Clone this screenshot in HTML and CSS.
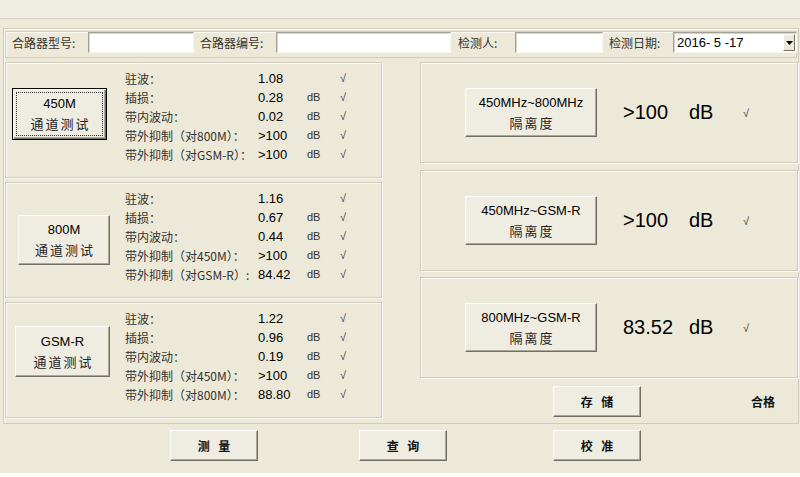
FILE: index.html
```html
<!DOCTYPE html>
<html lang="zh-CN">
<head>
<meta charset="utf-8">
<title>合路器测试</title>
<link rel="stylesheet" href="styles.css">
</head>
<body>
<div class="app">
  <div class="titlebar"></div>
  <div class="frame">
    <div class="inforow">
      <span class="lbl l1">合路器型号:</span><div class="field f1"></div>
      <span class="lbl l2">合路器编号:</span><div class="field f2"></div>
      <span class="lbl l3">检测人:</span><div class="field f3"></div>
      <span class="lbl l4">检测日期:</span>
      <div class="field combo">
        <span class="combo-text">2016- 5 -17</span>
        <span class="combo-btn"><svg width="7" height="4" viewBox="0 0 7 4"><path d="M0 0H7L3.5 4Z" fill="#000"/></svg></span>
      </div>
    </div>
    <div class="main">
      <div class="col-left">
        <section class="chan">
          <div class="btn chan-btn default b1"><div class="focus"><span class="en">450M</span><span class="zh">通道测试</span></div></div>
          <div class="results">
            <div class="r"><span class="k">驻波：</span><span class="v">1.08</span><span class="u"></span><span class="c">√</span></div>
            <div class="r"><span class="k">插损：</span><span class="v">0.28</span><span class="u">dB</span><span class="c">√</span></div>
            <div class="r"><span class="k">带内波动：</span><span class="v">0.02</span><span class="u">dB</span><span class="c">√</span></div>
            <div class="r"><span class="k">带外抑制（对800M）：</span><span class="v">&gt;100</span><span class="u">dB</span><span class="c">√</span></div>
            <div class="r"><span class="k">带外抑制（对GSM-R）：</span><span class="v">&gt;100</span><span class="u">dB</span><span class="c">√</span></div>
          </div>
        </section>
        <section class="chan">
          <div class="btn chan-btn b2"><span class="en">800M</span><span class="zh">通道测试</span></div>
          <div class="results">
            <div class="r"><span class="k">驻波：</span><span class="v">1.16</span><span class="u"></span><span class="c">√</span></div>
            <div class="r"><span class="k">插损：</span><span class="v">0.67</span><span class="u">dB</span><span class="c">√</span></div>
            <div class="r"><span class="k">带内波动：</span><span class="v">0.44</span><span class="u">dB</span><span class="c">√</span></div>
            <div class="r"><span class="k">带外抑制（对450M）：</span><span class="v">&gt;100</span><span class="u">dB</span><span class="c">√</span></div>
            <div class="r"><span class="k">带外抑制（对GSM-R）:</span><span class="v">84.42</span><span class="u">dB</span><span class="c">√</span></div>
          </div>
        </section>
        <section class="chan">
          <div class="btn chan-btn b3"><span class="en">GSM-R</span><span class="zh">通道测试</span></div>
          <div class="results">
            <div class="r"><span class="k">驻波：</span><span class="v">1.22</span><span class="u"></span><span class="c">√</span></div>
            <div class="r"><span class="k">插损：</span><span class="v">0.96</span><span class="u">dB</span><span class="c">√</span></div>
            <div class="r"><span class="k">带内波动：</span><span class="v">0.19</span><span class="u">dB</span><span class="c">√</span></div>
            <div class="r"><span class="k">带外抑制（对450M）：</span><span class="v">&gt;100</span><span class="u">dB</span><span class="c">√</span></div>
            <div class="r"><span class="k">带外抑制（对800M）：</span><span class="v">88.80</span><span class="u">dB</span><span class="c">√</span></div>
          </div>
        </section>
      </div>
      <div class="col-right">
        <section class="iso">
          <div class="btn iso-btn"><span class="en">450MHz~800MHz</span><span class="zh">隔离度</span></div>
          <span class="iso-v">&gt;100</span><span class="iso-u">dB</span><span class="iso-c">√</span>
        </section>
        <section class="iso iso2">
          <div class="btn iso-btn"><span class="en">450MHz~GSM-R</span><span class="zh">隔离度</span></div>
          <span class="iso-v">&gt;100</span><span class="iso-u">dB</span><span class="iso-c">√</span>
        </section>
        <section class="iso iso3">
          <div class="btn iso-btn"><span class="en">800MHz~GSM-R</span><span class="zh">隔离度</span></div>
          <span class="iso-v">83.52</span><span class="iso-u">dB</span><span class="iso-c">√</span>
        </section>
        <div class="save-row">
          <div class="btn cmd save">存 储</div>
          <span class="verdict">合格</span>
        </div>
      </div>
    </div>
  </div>
  <div class="bottombar">
    <div class="btn cmd m1">测 量</div>
    <div class="btn cmd m2">查 询</div>
    <div class="btn cmd m3">校 准</div>
  </div>
</div>
</body>
</html>
```
FILE: styles.css
```css
* { box-sizing: border-box; margin: 0; padding: 0; }
html, body { width: 800px; height: 477px; overflow: hidden; background: #fff; }
body { font-family: "Liberation Sans", "Noto Sans CJK SC", sans-serif; color: #000; }

.app { width: 800px; height: 473px; background: #ECE9D8; display: flex; flex-direction: column; }

.titlebar { flex: none; height: 19px; background: #EFEDE4; border-bottom: 1px solid #D6D3C5; }

.frame {
  flex: none; margin: 9px 0 0 3px; width: 796px; height: 396px;
  border: 1px solid #CFCCBD; box-shadow: inset 1px 1px #FAF9F3;
  padding-top: 2px;
}

/* info row */
.inforow {
  margin-left: 1px; width: 792px; height: 27px;
  border: 1px solid #CFCCBD; box-shadow: inset 1px 1px #FAF9F3;
  display: flex; align-items: flex-start; padding-left: 6px;
}
.lbl {
  font-family: "Noto Sans CJK SC", sans-serif; font-size: 12px; line-height: 21px;
  color: #333; white-space: nowrap; flex: none;
}
.l1 { width: 76px; }
.l2 { width: 76px; margin-left: 6px; }
.l3 { width: 57px; margin-left: 7px; }
.l4 { width: 64px; margin-left: 6px; }
.field {
  flex: none; height: 21px; background: #fff;
  border: 1px solid; border-color: #A3A195 #F6F5F0 #F6F5F0 #A3A195;
  box-shadow: inset 1px 1px #D8D5CA;
}
.f1 { width: 106px; }
.f2 { width: 175px; }
.f3 { width: 88px; }
.combo { width: 124px; display: flex; align-items: center; justify-content: space-between; padding: 0 1px 0 3px; }
.combo-text { font-size: 13px; line-height: 19px; }
.combo-btn {
  width: 12px; height: 17px; background: #ECE9D8;
  border: 1px solid; border-color: #fff #716F64 #716F64 #fff;
  display: flex; align-items: center; justify-content: center;
}

/* main */
.main { display: flex; margin-top: 4px; padding-left: 1px; }
.col-left { width: 377px; display: flex; flex-direction: column; gap: 4px; }
.col-right { width: 378px; margin-left: 38px; display: flex; flex-direction: column; }

.chan, .iso {
  border: 1px solid #CFCCBD; box-shadow: inset 1px 1px #FAF9F3, 1px 1px #FAF9F3;
}
.chan { height: 116px; display: grid; grid-template-columns: 119px 1fr; align-items: start; }

/* buttons */
.btn {
  background: #EFECE2;
  border: 1px solid; border-color: #FFFFFF #716F64 #716F64 #FFFFFF;
  box-shadow: inset -1px -1px #ACA899;
  display: flex; flex-direction: column; align-items: center; justify-content: center;
  text-align: center; color: #000;
}
.en { font-size: 13px; line-height: 20px; white-space: nowrap; }
.zh { font-family: "Noto Sans CJK SC", sans-serif; font-size: 13px; line-height: 20px; letter-spacing: 2px; padding-left: 2px; color: #222; }

.chan-btn { width: 95px; height: 51px; }
.b1 { margin: 25px 0 0 6px; height: 52px; border: 1px solid #000;
  box-shadow: inset 1px 1px #fff, inset -1px -1px #716F64, inset -2px -2px #ACA899; padding: 3px; }
.b1 .focus { width: 100%; height: 100%; border: 1px dotted #333; display: flex; flex-direction: column; align-items: center; justify-content: center; }
.b2 { margin: 32px 0 0 12px; width: 92px; height: 50px; }
.b3 { margin: 23px 0 0 9px; }

.results { padding-top: 6px; }
.r { display: flex; height: 19px; line-height: 19px; white-space: nowrap; }
.k { width: 133px; font-family: "Noto Sans CJK SC", sans-serif; font-size: 12px; color: #333; flex: none; overflow: visible; }
.v { width: 49px; font-size: 13px; flex: none; }
.u { width: 33px; font-size: 11px; color: #333; flex: none; }
.c { font-size: 11px; color: #333; }

/* isolation panels */
.iso { height: 101px; display: flex; align-items: center; padding-left: 44px; }
.iso2 { margin-top: 7px; }
.iso3 { margin-top: 6px; }
.iso-btn { width: 132px; height: 49px; }
.iso-v { margin-left: 26px; width: 66px; font-size: 20px; white-space: nowrap; }
.iso-u { width: 54px; font-size: 20px; }
.iso-c { font-size: 11px; color: #333; }

.save-row { display: flex; align-items: center; margin-top: 8px; padding-left: 133px; }
.cmd {
  width: 88px; height: 31px; font-family: "Noto Sans CJK SC", sans-serif;
  font-size: 12px; font-weight: 700; word-spacing: 6px; color: #111;
}
.verdict { margin-left: 110px; font-family: "Noto Sans CJK SC", sans-serif; font-size: 12px; font-weight: 700; color: #111; }

/* bottom */
.bottombar { flex: none; height: 49px; display: flex; align-items: flex-start; padding-top: 6px; }
.m1 { margin-left: 170px; }
.m2 { margin-left: 101px; }
.m3 { margin-left: 106px; }
```
